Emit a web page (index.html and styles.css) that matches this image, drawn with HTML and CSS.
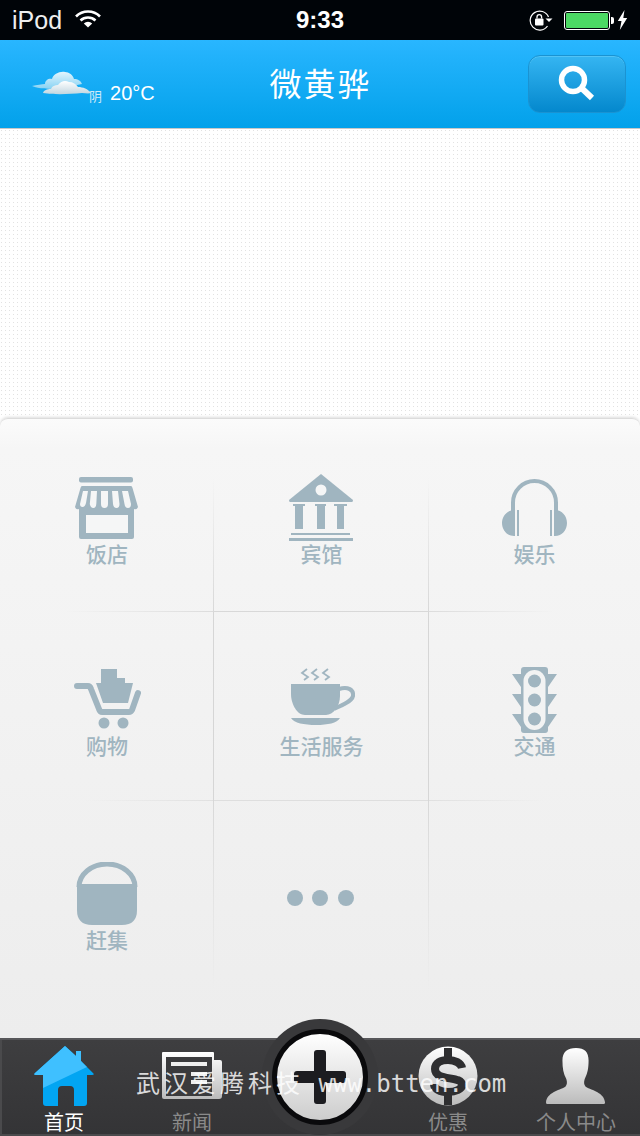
FILE: index.html
```html
<!DOCTYPE html>
<html lang="zh-CN">
<head>
  <meta charset="UTF-8">
  <title>微黄骅</title>
  <link rel="stylesheet" href="styles.css">
</head>
<body>
  <div class="phone">
    <div class="status">
      <div class="status-left">
        <span>iPod</span>
        <svg class="wifi" viewBox="0 0 26 18" width="26" height="18">
          <path d="M1 6.500a17 17 0 0 1 24 0" fill="none" stroke="#fff" stroke-width="2.600"/>
          <path d="M5.500 10.500a11 11 0 0 1 15 0" fill="none" stroke="#fff" stroke-width="2.600"/>
          <path d="M13 17.500 8.800 13.400a6 6 0 0 1 8.400 0z" fill="#fff"/>
        </svg>
      </div>
      <div class="clock">9:33</div>
      <div class="status-right">
        <svg viewBox="0 0 24 22" width="24" height="22">
          <path d="M18.500 17a9.500 9.500 0 1 1 1-9" fill="none" stroke="#fff" stroke-width="1.200"/>
          <path d="M16.500 9.500h7l-3.500 3.500z" fill="#fff"/>
          <rect x="6" y="9.500" width="8.500" height="7" rx="1" fill="#fff"/>
          <path d="M8 9.500V8a2.300 2.300 0 0 1 4.600 0v1.500" fill="none" stroke="#fff" stroke-width="1.300"/>
        </svg>
        <div class="battery"><div class="battery-fill"></div></div>
        <svg class="bolt" viewBox="0 0 11 20" width="11" height="20">
          <path d="M7.500 0 .8 11h3.700L2.800 20l7.400-12H6.300z" fill="#fff"/>
        </svg>
      </div>
    </div>

    <header class="topbar">
      <div class="weather">
        <svg viewBox="0 0 60 27" width="60" height="27">
          <defs>
            <linearGradient id="cloudBack" x1="0" y1="0" x2="0" y2="1">
              <stop offset="0" stop-color="#e4f5fd"/>
              <stop offset="1" stop-color="#86d2f3"/>
            </linearGradient>
            <linearGradient id="cloudFront" x1="0" y1="0" x2="0" y2="1">
              <stop offset="0" stop-color="#fff"/>
              <stop offset="1" stop-color="#c2d6e0"/>
            </linearGradient>
            <filter id="soft"><feGaussianBlur stdDeviation=".5"/></filter>
          </defs>
          <g fill="url(#cloudBack)" filter="url(#soft)">
            <path d="M0 18c5-1 10-2 13-2 0-4 4-6 7-5 1-5 8-8 13-7 4 0 8 3 9 7 4 0 7 2 8 5l-24 5c-9 0-19 0-26-3z"/>
          </g>
          <g fill="url(#cloudFront)" filter="url(#soft)">
            <path d="M11 25c1-3 4-4 8-4 1-3 4-4 7-4 3-4 7-5 11-3 4 0 7 2 9 5 5 0 10 2 13 6-3 1-6 0-9 0-12 1-26 2-39 0z"/>
          </g>
        </svg>
        <span class="weather-kind">阴</span>
        <span class="weather-temp">20°C</span>
      </div>
      <h1 class="title">微黄骅</h1>
      <button class="search">
        <svg viewBox="0 0 38 38" width="38" height="38">
          <circle cx="15" cy="15" r="11.500" fill="none" stroke="#fff" stroke-width="5.500"/>
          <path d="M24 23.500 34 33" stroke="#fff" stroke-width="6"/>
        </svg>
      </button>
    </header>

    <div class="banner"></div>

    <main class="panel">
      <div class="cell row-one line-right line-bottom">
        <div class="art">
          <svg viewBox="0 0 64 64" width="64" height="64">
            <rect x="4" y="1" width="54" height="5.500" rx="2" fill="#a0b5c0"/>
            <path d="M7 10h49q1 0 1.500 2L63 31q-1 3-4 2v28q0 2-2 2H6q-2 0-2-2V33q-3 1-4-2l5.500-19q.5-2 1.500-2z" fill="#a0b5c0"/>
            <rect x="11" y="39" width="42" height="18" fill="#f5f6f6"/>
            <path d="M8 15h5l-2 12q-1 4-3.500 4T5 28zM16 15h6l-.7 13q-.3 4-3 4t-3.500-4zM26 15h7v13q0 4-3.500 4T26 28zM37 15h6l1.500 13q0 4-3 4t-3.500-4zM47 15h6l3 13q0 4-3 4t-3.500-4z" fill="#f5f6f6"/>
          </svg>
        </div>
        <span>饭店</span>
      </div>
      <div class="cell row-one line-right line-bottom">
        <div class="art art-bank">
          <svg viewBox="0 0 64 67" width="64" height="67">
            <path d="M32 0 64 26q0 2-1 2H1q-1 0-1-2z" fill="#a0b5c0"/>
            <circle cx="32" cy="16" r="5.500" fill="#f5f6f6"/>
            <path d="M4 30h12v2h-2v23H6V32H4zM26 30h11v2h-1v23h-8V32h-2zM45 30h13v2h-3v23h-7V32h-3z" fill="#a0b5c0"/>
            <rect x="2" y="59" width="59" height="2" fill="#a0b5c0"/>
            <rect x="0" y="64" width="64" height="3" fill="#a0b5c0"/>
          </svg>
        </div>
        <span>宾馆</span>
      </div>
      <div class="cell row-one line-bottom">
        <div class="art art-phones">
          <svg viewBox="0 0 65 57" width="65" height="57">
            <path d="M11 32V23.500a21.500 21.500 0 0 1 43 0V32" fill="none" stroke="#a0b5c0" stroke-width="4"/>
            <path d="M13 31v26h-1C5 57 0 51 0 44s5-13 13-13zM52 31v26h1c7 0 12-6 12-13s-5-13-12-13z" fill="#a0b5c0"/>
            <path d="M15 31h2v26h-2zM48 31h2v26h-2z" fill="#a0b5c0"/>
          </svg>
        </div>
        <span>娱乐</span>
      </div>

      <div class="cell row-two line-right line-bottom">
        <div class="art">
          <svg viewBox="0 0 67 61" width="67" height="61">
            <path d="M27 1h16v9h8v5h8l-5 20H29l-7-20h5z" fill="#a0b5c0"/>
            <path d="M3 18h11q2 0 3 3l8 20q1 3 3 3h27q2 0 3-2l6-17" fill="none" stroke="#a0b5c0" stroke-width="6" stroke-linecap="round" stroke-linejoin="round"/>
            <circle cx="30" cy="55" r="5.500" fill="#a0b5c0"/>
            <circle cx="49" cy="55" r="5.500" fill="#a0b5c0"/>
          </svg>
        </div>
        <span>购物</span>
      </div>
      <div class="cell row-two line-right line-bottom">
        <div class="art art-cup">
          <svg viewBox="0 0 64 58" width="64" height="58">
            <path d="M16 1l-5 4 6 4-4 3M26 1l-5 4 6 4-4 3M37 1l-5 4 6 4-4 3" fill="none" stroke="#a0b5c0" stroke-width="1.800"/>
            <path d="M0 16h49v12c0 10-7 19-14 19H14C6 47 0 36 0 26z" fill="#a0b5c0"/>
            <path d="M48 21c9-3 15 1 14 7-1 5-10 9-19 13" fill="none" stroke="#a0b5c0" stroke-width="4"/>
            <path d="M0 50h49c-3 5-12 7-24 7S3 55 0 50z" fill="#a0b5c0"/>
          </svg>
        </div>
        <span>生活服务</span>
      </div>
      <div class="cell row-two line-bottom">
        <div class="art art-light">
          <svg viewBox="0 0 45 66" width="45" height="66">
            <rect x="9" y="0" width="27" height="66" rx="3" fill="#a0b5c0"/>
            <path d="M0 7h9v13zM45 7h-9v13zM0 27h9v13zM45 27h-9v13zM0 47h9v13zM45 47h-9v13z" fill="#a0b5c0"/>
            <rect x="11.500" y="3" width="22" height="60" rx="11" fill="#f2f3f3"/>
            <circle cx="22.500" cy="14" r="6.500" fill="#a0b5c0"/>
            <circle cx="22.500" cy="33" r="6.500" fill="#a0b5c0"/>
            <circle cx="22.500" cy="52" r="6.500" fill="#a0b5c0"/>
          </svg>
        </div>
        <span>交通</span>
      </div>

      <div class="cell row-three line-right">
        <div class="art">
          <svg viewBox="0 0 62 64" width="62" height="64">
            <path d="M3 25a28 23 0 0 1 56 0" fill="none" stroke="#a0b5c0" stroke-width="5"/>
            <path d="M1 22h60v26q0 15-15 15H16Q1 63 1 48z" fill="#a0b5c0"/>
          </svg>
        </div>
        <span>赶集</span>
      </div>
      <div class="cell row-three line-right">
        <div class="dots"><i></i><i></i><i></i></div>
      </div>
      <div class="cell row-three"></div>
    </main>

    <nav class="tabs">
      <div class="tab tab-on">
        <div class="tab-art">
          <svg viewBox="0 0 60 60" width="60" height="60">
            <path d="M31 0 42 10V5h5v10l12 12q2 2-1 2h-5v28q0 3-3 3H40V44q0-4-4-4h-8q-4 0-4 4v16H12q-3 0-3-3V29H2q-3 0-1-2z" fill="#02a5f2"/>
            <path d="M31 0 42 10V5h5v10l6 6L9 42V29H2q-3 0-1-2z" fill="#3fc0ff"/>
          </svg>
        </div>
        <span>首页</span>
      </div>
      <div class="tab">
        <div class="tab-art art-news">
          <svg viewBox="0 0 60 47" width="60" height="47">
            <defs>
              <linearGradient id="tabGrey" x1="0" y1="0" x2="0" y2="1">
                <stop offset="0" stop-color="#fff"/>
                <stop offset="1" stop-color="#bbb"/>
              </linearGradient>
            </defs>
            <path d="M0 1q0-1 1-1h50q1 0 1 1v7h6q2 0 2 2v34q0 3-3 3H2q-2 0-2-2z" fill="url(#tabGrey)"/>
            <rect x="4" y="5" width="46" height="39" fill="#3a3a3c"/>
            <rect x="9" y="10" width="36" height="4" fill="#eee"/>
            <rect x="29" y="20" width="16" height="4" fill="#eee"/>
            <rect x="29" y="28" width="16" height="4" fill="#eee"/>
          </svg>
        </div>
        <span>新闻</span>
      </div>
      <div class="tab"></div>
      <div class="tab">
        <div class="tab-art">
          <svg viewBox="0 0 60 60" width="60" height="60">
            <defs>
              <linearGradient id="tabCoin" x1="0" y1="0" x2="0" y2="1">
                <stop offset="0" stop-color="#fff"/>
                <stop offset="1" stop-color="#bbb"/>
              </linearGradient>
            </defs>
            <circle cx="30" cy="30" r="29.500" fill="url(#tabCoin)"/>
            <path d="M44 22c-1-5-7-8-14-8s-13 3-13 9c0 13 27 6 27 16 0 4-6 7-14 7s-14-3-14-8" fill="none" stroke="#2e2e30" stroke-width="8"/>
            <rect x="26" y="2" width="8" height="10" fill="#2e2e30"/>
            <rect x="26" y="48" width="8" height="11" fill="#2e2e30"/>
          </svg>
        </div>
        <span>优惠</span>
      </div>
      <div class="tab">
        <div class="tab-art">
          <svg viewBox="0 0 62 60" width="60" height="60">
            <path d="M31 1c9 0 13 4 13 13 0 8-1 13-4 19-1 3-1 6 1 8 7 4 19 6 20 16 0 2-1 2-3 2H3c-2 0-3 0-3-2 1-10 13-12 20-16 2-2 2-5 1-8-3-5-4-11-4-19C17 5 22 1 31 1z" fill="url(#tabGrey)"/>
          </svg>
        </div>
        <span>个人中心</span>
      </div>
      <div class="plus-ring">
        <div class="plus-face">
          <svg viewBox="0 0 52 54" width="52" height="54">
            <path d="M20 3q0-3 3-3h6q3 0 3 3v18h17q3 0 3 3v6q0 3-3 3H32v18q0 3-3 3h-6q-3 0-3-3V33H3q-3 0-3-3v-6q0-3 3-3h17z" fill="#1c1c20"/>
          </svg>
        </div>
      </div>
      <div class="watermark"><span class="watermark-cn">武汉爱腾科技</span> www.btten.com</div>
    </nav>
  </div>
</body>
</html>
```

FILE: styles.css
```css
* {
    box-sizing: border-box;
}
html, body {
    margin: 0;
    height: 100%;
}
body {
    font-family: "Noto Sans CJK SC", "Noto Sans", sans-serif;
    background: #fff;
}
.phone {
    width: 640px;
    height: 1136px;
    display: flex;
    flex-direction: column;
    overflow: hidden;
}

/* status bar */
.status {
    height: 40px;
    background: #000408;
    color: #fff;
    display: grid;
    grid-template-columns: 1fr auto 1fr;
    align-items: center;
    padding: 0 12px;
    font-family: "Liberation Sans", sans-serif;
}
.status-left {
    display: flex;
    align-items: center;
    gap: 13px;
    font-size: 25px;
    color: #eee;
}
.wifi {
    margin-top: -2px;
}
.clock {
    font-size: 24px;
    font-weight: bold;
}
.status-right {
    display: flex;
    align-items: center;
    justify-content: flex-end;
    gap: 11px;
}
.battery {
    width: 46px;
    height: 19px;
    border: 1px solid #fff;
    border-radius: 3px;
    padding: 1px;
    position: relative;
}
.battery::after {
    content: "";
    position: absolute;
    right: -5px;
    top: 5px;
    width: 3px;
    height: 7px;
    background: #fff;
    border-radius: 0 2px 2px 0;
}
.battery-fill {
    height: 100%;
    background: #4cd964;
    border-radius: 1px;
}
.bolt {
    margin-left: -4px;
}

/* blue header */
.topbar {
    height: 89px;
    background: linear-gradient(#29b6ff, #02a1ea);
    border-bottom: 1px solid #c8c8c8;
    display: grid;
    grid-template-columns: 1fr auto 1fr;
    align-items: center;
    padding: 0 14px;
    color: #fff;
}
.weather {
    display: flex;
    align-items: flex-end;
    height: 36px;
    padding-left: 18px;
}
.weather svg {
    flex: none;
    margin-bottom: 7px;
}
.weather-kind {
    font-size: 13px;
    color: #cfe9f7;
    margin: 0 0 -3px -3px;
}
.weather-temp {
    font-family: "Liberation Sans", sans-serif;
    font-size: 20px;
    margin: 0 0 -3px 8px;
}
.title {
    margin: 0 0 5px 1px;
    font-size: 32px;
    line-height: 44px;
    font-weight: normal;
    letter-spacing: 2px;
}
.search {
    justify-self: end;
    width: 98px;
    height: 58px;
    padding: 0;
    display: flex;
    align-items: center;
    justify-content: center;
    border: 1px solid #1a93d2;
    border-radius: 12px;
    background: linear-gradient(#35b5f2, #0488cd);
    box-shadow: inset 0 1px 0 #53c3f5;
}

/* dotted strip */
.banner {
    height: 289px;
    background-color: #fff;
    background-image: radial-gradient(circle at 1.500px 1.500px, #e2e2e2 .7px, transparent .7px);
    background-size: 4px 4px;
}

/* grid panel */
.panel {
    flex: 1;
    display: grid;
    grid-template-columns: 214px 215px 211px;
    grid-template-rows: 193px 189px 1fr;
    background: linear-gradient(#fbfbfb, #f6f6f6 30px, #ededed);
    border-top: 1px solid #dcdcdc;
    border-radius: 8px 8px 0 0;
    box-shadow: 0 -1px 3px #ddd;
}
.cell {
    position: relative;
    display: flex;
    flex-direction: column;
    align-items: center;
    color: #a0b5c0;
    font-size: 21px;
    font-weight: 500;
    line-height: 24px;
}
.row-one {
    padding-top: 57px;
}
.row-two {
    padding-top: 56px;
}
.row-three {
    padding-top: 61px;
}
.art {
    height: 65px;
    display: flex;
    align-items: flex-start;
}
.art-bank {
    margin: -2px 2px 0 0;
    height: 67px;
}
.art-phones {
    margin-top: 3px;
    height: 62px;
}
.art-cup {
    margin-left: 2px;
}
.art-light {
    margin-top: -1px;
    height: 66px;
}
.line-right::after {
    content: "";
    position: absolute;
    top: 0;
    bottom: 0;
    right: 0;
    width: 1px;
    background: linear-gradient(transparent 30%, #d8d8d8);
}
.row-two.line-right::after {
    background: #d6d6d6;
}
.row-three.line-right::after {
    background: linear-gradient(#d8d8d8, transparent 80%);
}
.line-bottom::before {
    content: "";
    position: absolute;
    left: 0;
    right: 0;
    bottom: 0;
    height: 1px;
}
.row-one.line-bottom:nth-child(1)::before {
    background: linear-gradient(90deg, transparent 30%, #dcdcdc);
}
.row-one.line-bottom:nth-child(2)::before {
    background: #d8d8d8;
}
.row-one.line-bottom:nth-child(3)::before {
    background: linear-gradient(90deg, #dcdcdc, transparent 60%);
}
.row-two.line-bottom:nth-child(4)::before {
    background: linear-gradient(90deg, transparent 40%, #e0e0e0);
}
.row-two.line-bottom:nth-child(5)::before {
    background: #dedede;
}
.row-two.line-bottom:nth-child(6)::before {
    background: linear-gradient(90deg, #e0e0e0, transparent 55%);
}
.dots {
    display: flex;
    gap: 9.500px;
    margin: 28px 3px 0 0;
}
.dots i {
    width: 16px;
    height: 16px;
    border-radius: 50%;
    background: #a0b5c0;
}

/* tab bar */
.tabs {
    position: relative;
    height: 98px;
    display: grid;
    grid-template-columns: repeat(5, 128px);
    background: linear-gradient(#3e3e40, #343436);
    border-top: 2px solid #57575a;
    border-bottom: 2px solid #4a4a4c;
    box-shadow: inset 2px 0 0 #4a4a4c;
    color: #8a8a8a;
    font-size: 20px;
    line-height: 24px;
}
.tab {
    display: flex;
    flex-direction: column;
    align-items: center;
}
.tab-art {
    height: 70px;
    padding-top: 6px;
}
.art-news {
    padding-top: 12px;
}
.tab-on span {
    color: #fff;
}
.plus-ring {
    position: absolute;
    left: 262px;
    top: -21px;
    width: 116px;
    height: 116px;
    border-radius: 50%;
    background: #39393b;
    display: flex;
    align-items: center;
    justify-content: center;
}
.plus-face {
    width: 96px;
    height: 96px;
    border-radius: 50%;
    border: 5px solid #0a0a0c;
    background: linear-gradient(#fff, #cdcdcd);
    display: flex;
    align-items: center;
    justify-content: center;
}
.watermark {
    position: absolute;
    left: 136px;
    top: 27px;
    font-family: "DejaVu Sans Mono", "Noto Sans CJK SC", monospace;
    font-size: 24px;
    line-height: 34px;
    color: rgba(255, 255, 255, .82);
    white-space: nowrap;
}
.watermark-cn {
    letter-spacing: 4px;
}
```
